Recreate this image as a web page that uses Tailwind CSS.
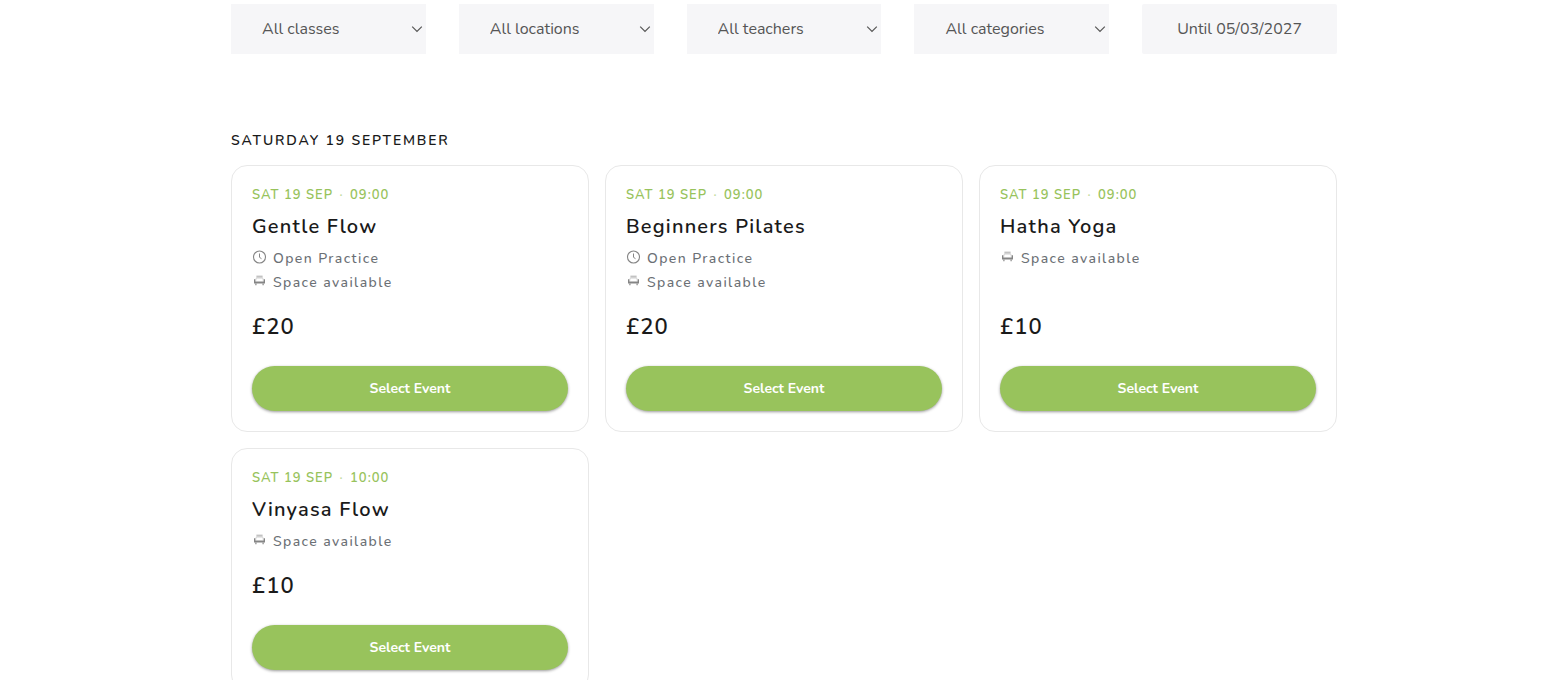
<!DOCTYPE html>
<html lang="en">
<head>
<meta charset="utf-8">
<meta name="viewport" content="width=device-width, initial-scale=1">
<title>Classes</title>
<script src="https://cdn.jsdelivr.net/npm/@tailwindcss/browser@4"></script>
</head>
<body class="bg-white font-['Nunito','Lato',sans-serif] text-[#1a1a1a]">
<svg class="hidden" aria-hidden="true">
  <symbol id="chevron" viewBox="0 0 12 12"><path d="M1.2 3.6 6 8.4l4.8-4.8" fill="none" stroke="currentColor" stroke-width="1.2"/></symbol>
  <symbol id="clock" viewBox="0 0 15 15"><circle cx="7.5" cy="7" r="6" fill="none" stroke="currentColor" stroke-width="1.1"/><path d="M7.5 3.5v3.8l2 1.4" fill="none" stroke="currentColor" stroke-width="1"/></symbol>
  <symbol id="seat" viewBox="0 0 15 15"><path d="M4.4 1.6h6.2v2H4.4z" fill="currentColor" opacity=".5"/><path d="M4 6.6V4.2h7v2.4" fill="none" stroke="currentColor" stroke-width=".7" opacity=".4"/><path d="M2 5.2h1.4v2.4h8.2V5.2H13v4.3H2z" fill="currentColor"/><path d="M3.9 9.4v1.8m7.2-1.8v1.8" stroke="currentColor" stroke-width="1.2"/></symbol>
</svg>
<main class="mx-auto max-w-[1106px] pt-1 pb-3">
  <form class="grid grid-cols-5 gap-[33px] text-base text-[#555]">
    <div class="relative">
      <select aria-label="Class" class="h-[50px] w-full appearance-none bg-[#f6f6f8] pr-6 pl-[31px]"><option>All classes</option></select>
      <svg class="pointer-events-none absolute top-[19px] right-[3px] size-3"><use href="#chevron"/></svg>
    </div>
    <div class="relative">
      <select aria-label="Location" class="h-[50px] w-full appearance-none bg-[#f6f6f8] pr-6 pl-[31px]"><option>All locations</option></select>
      <svg class="pointer-events-none absolute top-[19px] right-[3px] size-3"><use href="#chevron"/></svg>
    </div>
    <div class="relative">
      <select aria-label="Teacher" class="h-[50px] w-full appearance-none bg-[#f6f6f8] pr-6 pl-[31px]"><option>All teachers</option></select>
      <svg class="pointer-events-none absolute top-[19px] right-[3px] size-3"><use href="#chevron"/></svg>
    </div>
    <div class="relative">
      <select aria-label="Category" class="h-[50px] w-full appearance-none bg-[#f6f6f8] pr-6 pl-[31px]"><option>All categories</option></select>
      <svg class="pointer-events-none absolute top-[19px] right-[3px] size-3"><use href="#chevron"/></svg>
    </div>
    <input aria-label="Until date" type="text" value="Until 05/03/2027" class="h-[50px] w-full min-w-0 rounded-xs bg-[#f6f6f8] text-center">
  </form>

  <h2 class="mt-[77px] text-sm leading-5 font-semibold tracking-[0.13em]">SATURDAY 19 SEPTEMBER</h2>
  <div class="mt-3.5 grid grid-cols-3 gap-4">
    <article class="flex flex-col rounded-2xl border border-[#e8e8e8] p-5">
      <p class="text-[13px] leading-[18px] font-semibold tracking-[1px] text-[#98c35c]">SAT 19 SEP <span class="mx-0.5 opacity-60">·</span> 09:00</p>
      <h3 class="mt-[9px] text-xl leading-7 font-semibold tracking-[0.06em]">Gentle Flow</h3>
      <ul class="mt-1.5 flex-1 text-sm leading-6 font-medium tracking-widest text-[#6b7075]">
        <li class="flex gap-1.5"><svg class="mt-[3px] size-[15px] text-[#858585]"><use href="#clock"/></svg>Open Practice</li>
        <li class="flex gap-1.5"><svg class="mt-[3px] size-[15px] text-[#858585]"><use href="#seat"/></svg>Space available</li>
      </ul>
      <p class="mt-4 text-[22px] leading-8 font-semibold tracking-[1px]">£20</p>
      <button type="button" class="mt-[23px] h-[45px] rounded-full bg-[#98c35c] text-sm font-bold text-white shadow-[0_1px_3px_rgba(0,0,0,0.4)]">Select Event</button>
    </article>
    <article class="flex flex-col rounded-2xl border border-[#e8e8e8] p-5">
      <p class="text-[13px] leading-[18px] font-semibold tracking-[1px] text-[#98c35c]">SAT 19 SEP <span class="mx-0.5 opacity-60">·</span> 09:00</p>
      <h3 class="mt-[9px] text-xl leading-7 font-semibold tracking-[0.06em]">Beginners Pilates</h3>
      <ul class="mt-1.5 flex-1 text-sm leading-6 font-medium tracking-widest text-[#6b7075]">
        <li class="flex gap-1.5"><svg class="mt-[3px] size-[15px] text-[#858585]"><use href="#clock"/></svg>Open Practice</li>
        <li class="flex gap-1.5"><svg class="mt-[3px] size-[15px] text-[#858585]"><use href="#seat"/></svg>Space available</li>
      </ul>
      <p class="mt-4 text-[22px] leading-8 font-semibold tracking-[1px]">£20</p>
      <button type="button" class="mt-[23px] h-[45px] rounded-full bg-[#98c35c] text-sm font-bold text-white shadow-[0_1px_3px_rgba(0,0,0,0.4)]">Select Event</button>
    </article>
    <article class="flex flex-col rounded-2xl border border-[#e8e8e8] p-5">
      <p class="text-[13px] leading-[18px] font-semibold tracking-[1px] text-[#98c35c]">SAT 19 SEP <span class="mx-0.5 opacity-60">·</span> 09:00</p>
      <h3 class="mt-[9px] text-xl leading-7 font-semibold tracking-[0.06em]">Hatha Yoga</h3>
      <ul class="mt-1.5 flex-1 text-sm leading-6 font-medium tracking-widest text-[#6b7075]">
        <li class="flex gap-1.5"><svg class="mt-[3px] size-[15px] text-[#858585]"><use href="#seat"/></svg>Space available</li>
      </ul>
      <p class="mt-4 text-[22px] leading-8 font-semibold tracking-[1px]">£10</p>
      <button type="button" class="mt-[23px] h-[45px] rounded-full bg-[#98c35c] text-sm font-bold text-white shadow-[0_1px_3px_rgba(0,0,0,0.4)]">Select Event</button>
    </article>
    <article class="flex flex-col rounded-2xl border border-[#e8e8e8] p-5">
      <p class="text-[13px] leading-[18px] font-semibold tracking-[1px] text-[#98c35c]">SAT 19 SEP <span class="mx-0.5 opacity-60">·</span> 10:00</p>
      <h3 class="mt-[9px] text-xl leading-7 font-semibold tracking-[0.06em]">Vinyasa Flow</h3>
      <ul class="mt-1.5 flex-1 text-sm leading-6 font-medium tracking-widest text-[#6b7075]">
        <li class="flex gap-1.5"><svg class="mt-[3px] size-[15px] text-[#858585]"><use href="#seat"/></svg>Space available</li>
      </ul>
      <p class="mt-4 text-[22px] leading-8 font-semibold tracking-[1px]">£10</p>
      <button type="button" class="mt-[23px] h-[45px] rounded-full bg-[#98c35c] text-sm font-bold text-white shadow-[0_1px_3px_rgba(0,0,0,0.4)]">Select Event</button>
    </article>
  </div>
</main>
</body>
</html>
